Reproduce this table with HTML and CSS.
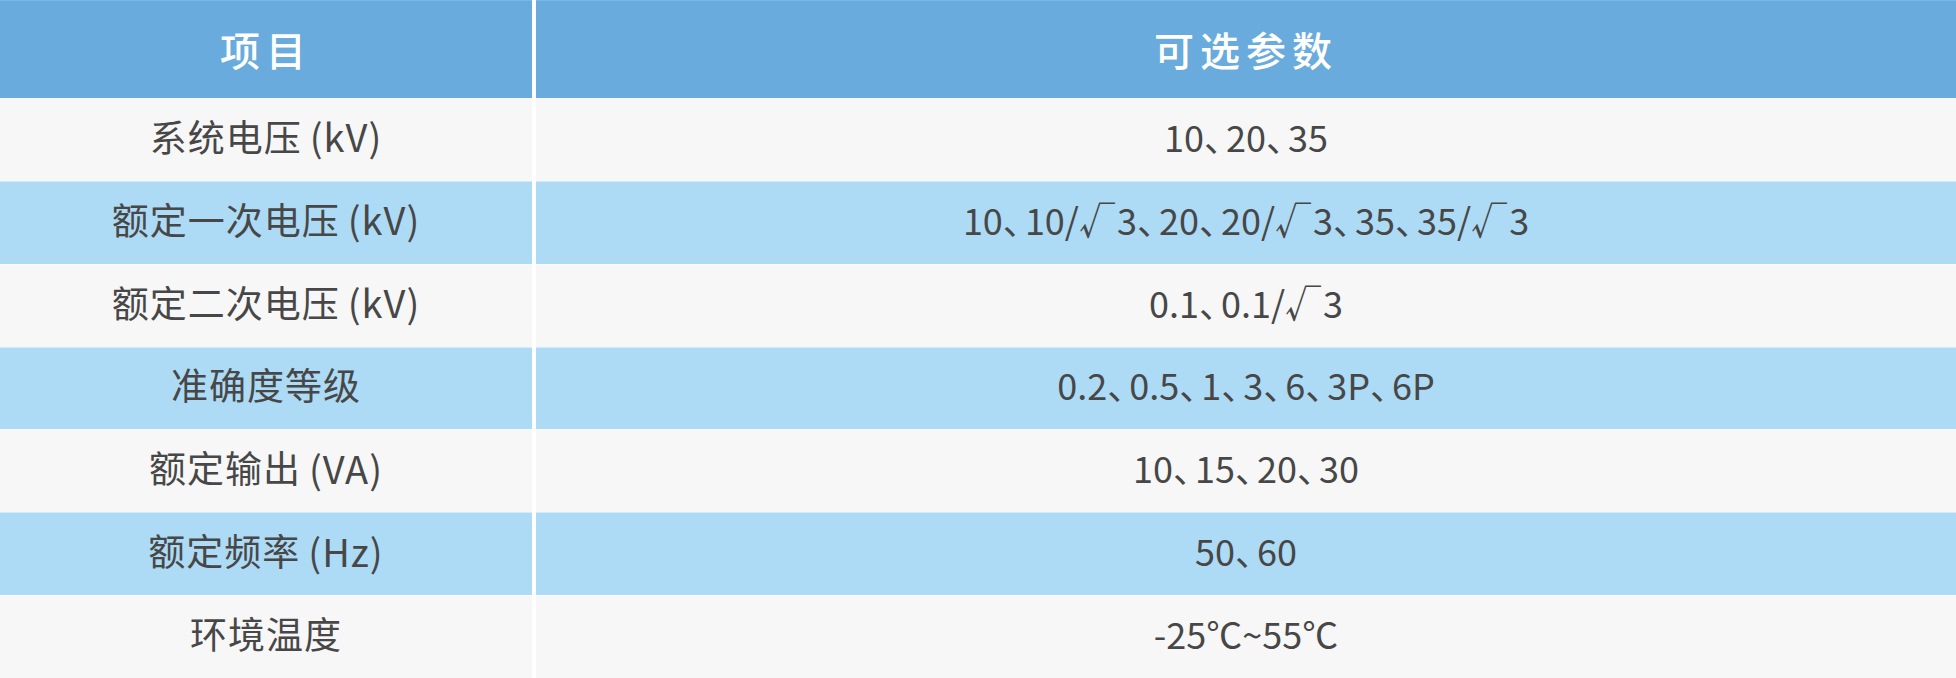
FILE: index.html
```html
<!DOCTYPE html>
<html lang="zh-CN">
<head>
<meta charset="utf-8">
<title>参数表</title>
<link rel="stylesheet" href="styles.css">
</head>
<body>
<div class="table">
  <div class="cell head">项目</div>
  <div class="cell head">可选参数</div>

  <div class="cell odd name">系统电压<span class="unit">(kV)</span></div>
  <div class="cell odd val">10<span class="sep">、</span>20<span class="sep">、</span>35</div>

  <div class="cell even name">额定一次电压<span class="unit">(kV)</span></div>
  <div class="cell even val">10<span class="sep">、</span>10/<span class="rad">√</span>3<span class="sep">、</span>20<span class="sep">、</span>20/<span class="rad">√</span>3<span class="sep">、</span>35<span class="sep">、</span>35/<span class="rad">√</span>3</div>

  <div class="cell odd name">额定二次电压<span class="unit">(kV)</span></div>
  <div class="cell odd val">0.1<span class="sep">、</span>0.1/<span class="rad">√</span>3</div>

  <div class="cell even name">准确度等级</div>
  <div class="cell even val">0.2<span class="sep">、</span>0.5<span class="sep">、</span>1<span class="sep">、</span>3<span class="sep">、</span>6<span class="sep">、</span>3P<span class="sep">、</span>6P</div>

  <div class="cell odd name">额定输出<span class="unit">(VA)</span></div>
  <div class="cell odd val">10<span class="sep">、</span>15<span class="sep">、</span>20<span class="sep">、</span>30</div>

  <div class="cell even name">额定频率<span class="unit">(Hz)</span></div>
  <div class="cell even val">50<span class="sep">、</span>60</div>

  <div class="cell odd name">环境温度</div>
  <div class="cell odd val">-25℃~55℃</div>
</div>
</body>
</html>
```

FILE: styles.css
```css
html, body {
  margin: 0;
  padding: 0;
  background: #ffffff;
}

.table {
  width: 1956px;
  height: 678px;
  display: grid;
  grid-template-columns: 532px 1fr;
  grid-template-rows: 98px repeat(7, 1fr);
  column-gap: 4px;
  background: #ffffff;
  font-family: "Noto Sans CJK SC", "Noto Sans", sans-serif;
}

.cell {
  display: flex;
  align-items: center;
  justify-content: center;
  font-size: 36px;
  color: #474747;
  border-top: 1px solid rgba(255, 255, 255, 0.45);
  padding-bottom: 8px;
  white-space: nowrap;
}

.head {
  background: #68abdc;
  color: #ffffff;
  font-size: 40px;
  font-weight: 500;
  letter-spacing: 6px;
  border-top-color: #7db6e1;
  padding-bottom: 2px;
}

.name {
  font-size: 37px;
  letter-spacing: 1px;
}

.unit {
  margin-left: 8px;
  font-size: 38px;
}

.odd {
  background: #f7f7f7;
}

.even {
  background: #addbf5;
}

.sep {
  font-feature-settings: "halt";
  margin-right: 4px;
}

.rad {
  margin-right: 2px;
}
```
